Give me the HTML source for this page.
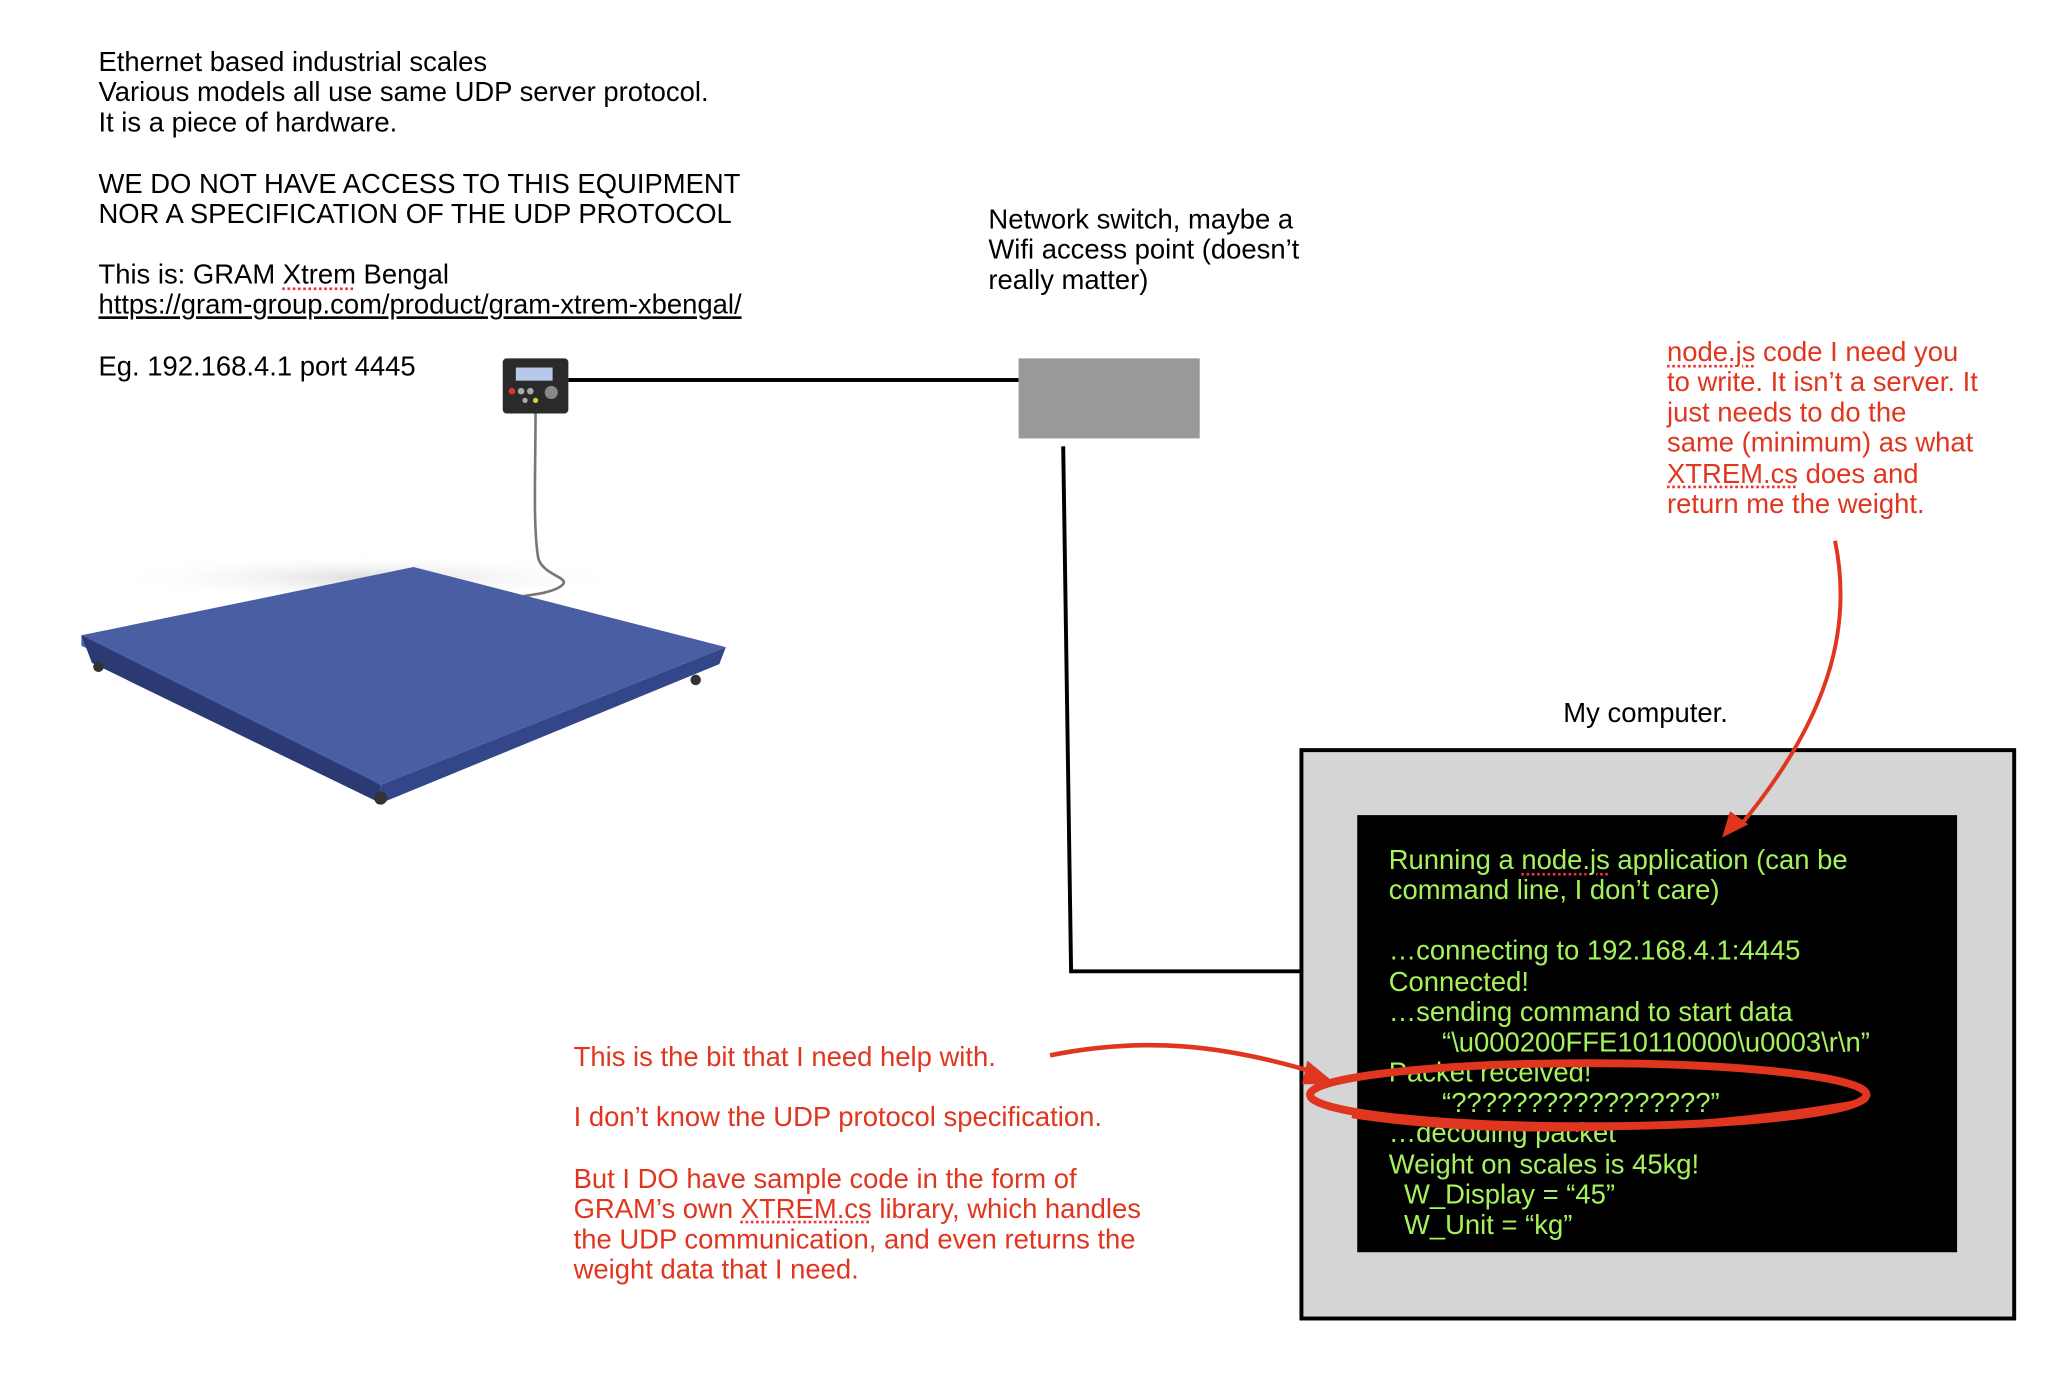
<!DOCTYPE html>
<html><head><meta charset="utf-8"><style>
html,body{margin:0;padding:0;background:#fff;}
body{width:2060px;height:1378px;overflow:hidden;position:relative;}
#s{position:absolute;left:0;top:0;width:1570px;height:1050px;transform:scale(1.3126);transform-origin:0 0;font-family:"Liberation Sans",Arial,sans-serif;font-size:20.9px;line-height:23.15px;}
.t{position:absolute;white-space:pre;}
.r{color:#e0361f;}
.g{color:#a6f25c;}
.sp{text-decoration:underline dotted #e33;text-decoration-thickness:2px;text-underline-offset:3px;}
.blk{position:absolute;background:#000;}
</style></head><body><div id="s">

<div class="t" style="left:75px;top:36px;">Ethernet based industrial scales
Various models all use same UDP server protocol.
It is a piece of hardware.

WE DO NOT HAVE ACCESS TO THIS EQUIPMENT
NOR A SPECIFICATION OF THE UDP PROTOCOL

This is: GRAM <span class="sp">Xtrem</span> Bengal
<u>https://gram-group.com/product/gram-xtrem-xbengal/</u>

Eg. 192.168.4.1 port 4445</div>

<div class="t" style="left:753px;top:156px;">Network switch, maybe a
Wifi access point (doesn’t
really matter)</div>

<svg style="position:absolute;left:0;top:0" width="1560" height="1044">
<defs><radialGradient id="sh" cx="50%" cy="50%" r="50%"><stop offset="0" stop-color="#ddd"/><stop offset="1" stop-color="#fff" stop-opacity="0"/></radialGradient></defs>
<ellipse cx="280" cy="440" rx="200" ry="18" fill="url(#sh)"/>
<path d="M408 314 C408 360 406 400 410 425 C414 440 440 440 425 448 C410 455 395 452 390 458" stroke="#777" stroke-width="2" fill="none"/>
<polygon points="62,484 315,432 553,493 290,598 62,492" fill="#4a5fa3"/>
<polygon points="62,484 290,598 290,612 70,505" fill="#2b3a73"/>
<polygon points="290,598 553,493 548,506 290,612" fill="#34468a"/>
<circle cx="75" cy="508" r="4" fill="#333"/><circle cx="290" cy="608" r="5" fill="#333"/><circle cx="530" cy="518" r="4" fill="#333"/>
<rect x="383" y="273" width="50" height="42" rx="3" fill="#2a2a2a"/>
<rect x="393" y="280" width="28" height="10" fill="#b8c8ea"/>
<circle cx="390" cy="298" r="2.5" fill="#d33"/><circle cx="397" cy="298" r="2.5" fill="#aaa"/><circle cx="404" cy="298" r="2.5" fill="#aaa"/><circle cx="420" cy="299" r="5" fill="#888"/>
<circle cx="400" cy="305" r="2" fill="#aaa"/><circle cx="408" cy="305" r="2" fill="#dc3"/>
</svg>

<div class="blk" style="left:433px;top:288px;width:343px;height:3px;"></div>
<div style="position:absolute;left:776px;top:273px;width:138px;height:61px;background:#999;"></div>
<svg style="position:absolute;left:0;top:0" width="1560" height="1044"><polyline points="810,340 816,740 992,740" fill="none" stroke="#000" stroke-width="3"/></svg>

<div class="t" style="left:1191px;top:532px;">My computer.</div>
<div style="position:absolute;left:990px;top:570px;width:540px;height:430px;border:3px solid #000;background:#d5d5d5;"></div>
<div style="position:absolute;left:1034px;top:621px;width:457px;height:333px;background:#000;"></div>
<div class="t g" style="left:1058px;top:644px;">Running a <span class="sp">node.js</span> application (can be
command line, I don’t care)

…connecting to 192.168.4.1:4445
Connected!
…sending command to start data
       “\u000200FFE10110000\u0003\r\n”
Packet received!
       “?????????????????”
…decoding packet
Weight on scales is 45kg!
  W_Display = “45”
  W_Unit = “kg”</div>

<div class="t r" style="left:1270px;top:257px;"><span class="sp">node.js</span> code I need you
to write. It isn’t a server. It
just needs to do the
same (minimum) as what
<span class="sp">XTREM.cs</span> does and
return me the weight.</div>

<div class="t r" style="left:437px;top:794px;">This is the bit that I need help with.

I don’t know the UDP protocol specification.

But I DO have sample code in the form of
GRAM’s own <span class="sp">XTREM.cs</span> library, which handles
the UDP communication, and even returns the
weight data that I need.</div>

<svg style="position:absolute;left:0;top:0" width="1560" height="1044" fill="none" stroke="#e0361f">
<path d="M1398 412 C1410 470 1400 540 1325 630" stroke-width="3"/>
<polygon points="1312,638 1318,618 1332,628" fill="#e0361f" stroke="none"/>
<path d="M800 804 C870 790 930 795 1005 818" stroke-width="3.5"/>
<polygon points="1018,826 996,808 992,826" fill="#e0361f" stroke="none"/>
<ellipse cx="1210" cy="834" rx="212" ry="24" stroke-width="6"/>
<path d="M1030 850 C1150 868 1300 860 1415 840" stroke-width="4"/>
</svg>

</div></body></html>
